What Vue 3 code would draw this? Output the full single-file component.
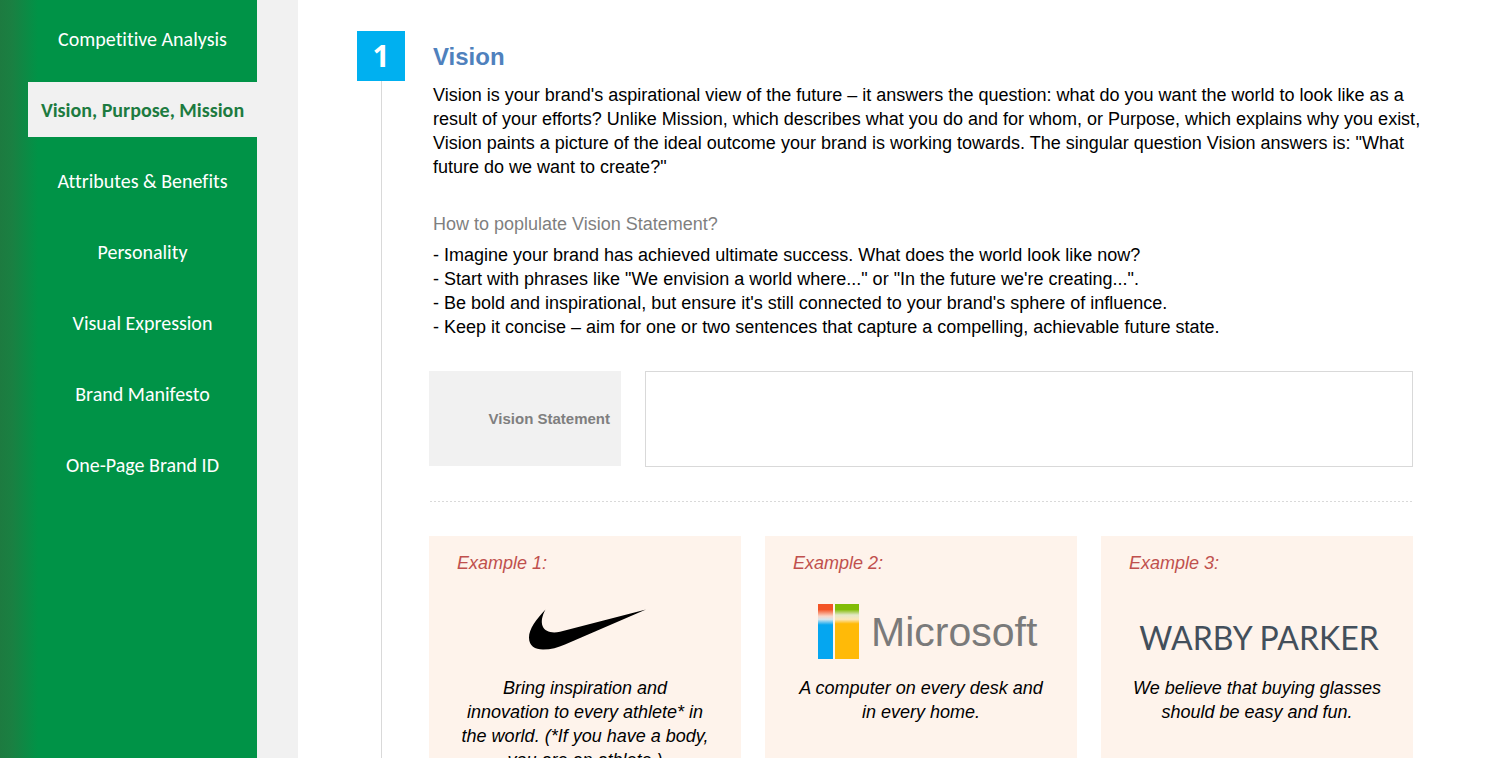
<template>
    <div class="page">
        <aside class="sidebar">
            <nav class="menu">
                <a v-for="item in menu" :key="item" href="#" class="menu-item" :class="{ active: item === current }"
                    @click.prevent="current = item">{{ item }}</a>
            </nav>
        </aside>
        <main class="main">
            <div class="rail">
                <span class="step">1</span>
                <span class="line"></span>
            </div>
            <section class="content">
                <div class="intro">
                    <h2>Vision</h2>
                    <p>Vision is your brand's aspirational view of the future – it answers the question: what do you
                        want the world to look like as a result of your efforts? Unlike Mission, which describes what
                        you do and for whom, or Purpose, which explains why you exist, Vision paints a picture of the
                        ideal outcome your brand is working towards. The singular question Vision answers is: "What
                        future do we want to create?"</p>
                    <h3>How to poplulate Vision Statement?</h3>
                    <ul>
                        <li v-for="tip in tips" :key="tip">- {{ tip }}</li>
                    </ul>
                </div>
                <div class="work">
                    <div class="field">
                        <label for="statement">Vision Statement</label>
                        <textarea id="statement" v-model="statement"></textarea>
                    </div>
                    <div class="divider"></div>
                    <div class="examples">
                        <article v-for="(example, i) in examples" :key="example.brand" class="card">
                            <h4>Example {{ i + 1 }}:</h4>
                            <svg v-if="example.brand === 'nike'" class="logo" viewBox="0 0 256 101">
                                <path
                                    d="M88.5 34.5C79 44.500 72 54 72 62.500C72 71 78 74.500 86 74.500C94 74.500 101 72.500 108 69.500L189 34.500L103 56.700C88 60 79.500 51 88.500 34.500Z" />
                            </svg>
                            <svg v-else-if="example.brand === 'microsoft'" class="logo" viewBox="0 0 256 101">
                                <defs>
                                    <linearGradient id="ms-left" x1="0" y1="0" x2="0" y2="1">
                                        <stop offset="0.1" stop-color="#f35325" />
                                        <stop offset="0.22" stop-color="#fbd5c6" />
                                        <stop offset="0.28" stop-color="#d5e6ee" />
                                        <stop offset="0.38" stop-color="#05a6f0" />
                                    </linearGradient>
                                    <linearGradient id="ms-right" x1="0" y1="0" x2="0" y2="1">
                                        <stop offset="0.1" stop-color="#81bc06" />
                                        <stop offset="0.2" stop-color="#e4e8c8" />
                                        <stop offset="0.28" stop-color="#fbe6b8" />
                                        <stop offset="0.36" stop-color="#ffba08" />
                                    </linearGradient>
                                </defs>
                                <rect x="25" y="29" width="15" height="55" fill="url(#ms-left)" />
                                <rect x="42" y="29" width="24" height="55" fill="url(#ms-right)" />
                                <text x="78" y="71" class="microsoft">Microsoft</text>
                            </svg>
                            <svg v-else class="logo" viewBox="0 0 256 101">
                                <text x="130" y="75" text-anchor="middle" class="warby">WARBY PARKER</text>
                            </svg>
                            <p>{{ example.text }}</p>
                        </article>
                    </div>
                </div>
            </section>
        </main>
    </div>
</template>

<script setup>
import { ref } from 'vue';

const current = ref('Vision, Purpose, Mission');
const statement = ref('');

const menu = [
    'Competitive Analysis',
    'Vision, Purpose, Mission',
    'Attributes & Benefits',
    'Personality',
    'Visual Expression',
    'Brand Manifesto',
    'One-Page Brand ID'
];

const tips = [
    'Imagine your brand has achieved ultimate success. What does the world look like now?',
    'Start with phrases like "We envision a world where..." or "In the future we\'re creating...".',
    'Be bold and inspirational, but ensure it\'s still connected to your brand\'s sphere of influence.',
    'Keep it concise – aim for one or two sentences that capture a compelling, achievable future state.'
];

const examples = [
    { brand: 'nike', text: 'Bring inspiration and innovation to every athlete* in the world. (*If you have a body, you are an athlete.)' },
    { brand: 'microsoft', text: 'A computer on every desk and in every home.' },
    { brand: 'warby', text: 'We believe that buying glasses should be easy and fun.' }
];
</script>

<style>
body {
    margin: 0;
    background: #fff;
}
</style>

<style scoped>
.page {
    display: flex;
    height: 100vh;
    overflow: hidden;
    font-family: "Liberation Sans", Arial, sans-serif;
    font-size: 18px;
    line-height: 24px;
    color: #000;
}

h2,
h3,
h4,
p,
ul {
    margin: 0;
    padding: 0;
}

/* Sidebar */
.sidebar {
    flex: none;
    width: 257px;
    border-right: 41px solid #f1f1f1;
    background: linear-gradient(to right, #1d7b40, #1a8042 12px, #009347 38px);
}

.menu {
    display: flex;
    flex-direction: column;
    gap: 16px;
    padding: 11px 0 0 28px;
}

.menu-item {
    display: flex;
    align-items: center;
    justify-content: center;
    height: 55px;
    font-family: Calibri, Carlito, Lato, sans-serif;
    font-size: 20px;
    font-variant-ligatures: none;
    color: #fff;
    text-decoration: none;
    white-space: nowrap;
}

.menu-item.active {
    background: #f1f1f1;
    color: #1d7b40;
    font-weight: bold;
}

/* Main column */
.main {
    flex: 1;
    min-width: 0;
    display: flex;
    gap: 24px;
    padding: 31px 72px 0 59px;
}

.rail {
    flex: none;
    display: flex;
    flex-direction: column;
    align-items: center;
    width: 48px;
}

.step {
    width: 48px;
    height: 50px;
    background: #00b0f0;
    color: #fff;
    font-family: "Open Sans", sans-serif;
    font-size: 30px;
    font-weight: bold;
    line-height: 50px;
    text-align: center;
}

.line {
    flex: 1;
    width: 1px;
    background: #d9d9d9;
}

.content {
    flex: 1;
    min-width: 0;
}

.intro {
    padding-left: 4px;
}

h2 {
    padding: 12px 0;
    font-size: 24px;
    line-height: 28px;
    color: #4f81bd;
}

h3 {
    margin: 33px 0 7px;
    font-size: 18px;
    font-weight: normal;
    color: #7f7f7f;
}

ul {
    list-style: none;
}

.work {
    padding-right: 15px;
}

.field {
    display: flex;
    gap: 24px;
    margin-top: 32px;
}

.field label {
    box-sizing: border-box;
    display: flex;
    align-items: center;
    justify-content: flex-end;
    width: 192px;
    height: 95px;
    padding-right: 11px;
    background: #f1f1f1;
    color: #7f7f7f;
    font-size: 15px;
    font-weight: bold;
}

.field textarea {
    box-sizing: border-box;
    flex: 1;
    height: 96px;
    margin: 0;
    padding: 8px;
    border: 1px solid #d9d9d9;
    border-radius: 0;
    background: #fff;
    font: inherit;
    resize: none;
    outline: none;
}

.divider {
    height: 1px;
    margin: 34px 0;
    background: repeating-linear-gradient(to right, #fff 0 1px, #d9d9d9 1px 3px, #fff 3px 4px);
}

.examples {
    display: grid;
    grid-template-columns: repeat(3, 1fr);
    gap: 24px;
}

.card {
    padding: 15px 28px 28px;
    background: #fef3eb;
    font-style: italic;
    text-align: center;
}

.card h4 {
    font-size: 18px;
    font-weight: normal;
    text-align: left;
    color: #c0504d;
}

.card p {
    padding: 0 3px;
}

.logo {
    display: block;
    width: 100%;
    height: 101px;
    font-style: normal;
}

.microsoft {
    font-size: 41px;
    fill: #7a7a7a;
}

.warby {
    font-family: Lato, sans-serif;
    font-size: 32px;
    fill: #434f5b;
}
</style>
